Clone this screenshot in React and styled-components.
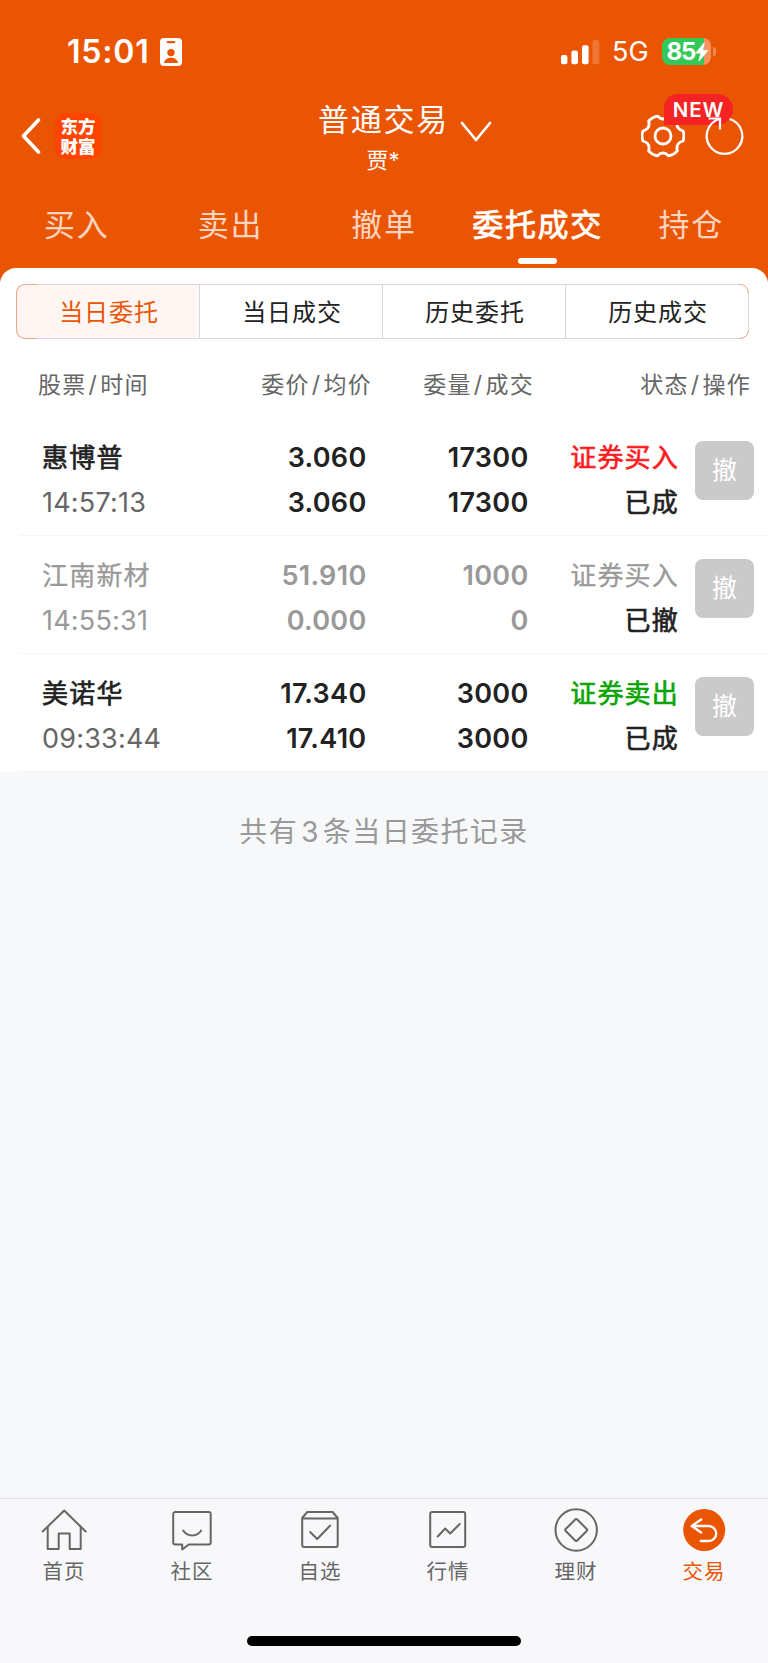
import React from "react";
import styled, { createGlobalStyle } from "styled-components";

const Global = createGlobalStyle`
  * { box-sizing: border-box; }
  body { margin: 0; background: #f7f8fa; }
`;

const Page = styled.div`
  width: 768px;
  height: 1663px;
  display: flex;
  flex-direction: column;
  background: #f7f8fa;
  overflow: hidden;
  font-family: "Inter", "Noto Sans CJK SC", sans-serif;
  color: #222;
`;

const Header = styled.header`
  height: 282px;
  flex: none;
  margin-bottom: -14px;
  background: #ea5504;
  color: #fff;
`;

const StatusBar = styled.div`
  height: 93px;
  padding: 11px 57px 0 67px;
  display: flex;
  align-items: center;
`;

const Clock = styled.span`
  width: 93px;
  font-size: 32px;
  font-weight: 600;
  line-height: 40px;
  letter-spacing: 0.8px;
  white-space: nowrap;
`;

const StatusRight = styled.div`
  margin-left: auto;
  display: flex;
  align-items: center;
`;

const Network = styled.span`
  width: 50px;
  margin-left: 12px;
  font-size: 27px;
  line-height: 32px;
`;

const Battery = styled.div`
  position: relative;
  width: 49px;
  height: 27px;
  margin-top: -1px;
  padding-left: 4.5px;
  border-radius: 8px;
  display: flex;
  align-items: center;
  background: linear-gradient(90deg, #34c759 42px, #f3935d 42px);
  font-size: 24px;
  font-weight: 700;
  line-height: 27px;
  letter-spacing: -1.2px;
`;

const BatteryCap = styled.i`
  position: absolute;
  left: 51px;
  top: 9px;
  width: 3px;
  height: 9px;
  border-radius: 0 4px 4px 0;
  background: #f08a50;
`;

const NavBar = styled.div`
  height: 89px;
  display: grid;
  grid-template-columns: 1fr auto 1fr;
  padding: 0 24px 0 20px;
`;

const NavLeft = styled.div`
  display: flex;
  align-items: center;
  gap: 13px;
  height: 86px;
`;

const Logo = styled.div`
  width: 46px;
  height: 46px;
  padding-top: 1px;
  border-radius: 10px;
  background: #ff4400;
  display: flex;
  flex-direction: column;
  align-items: center;
  justify-content: center;
  font-size: 17.5px;
  font-weight: 900;
  line-height: 19.5px;
`;

const NavTitle = styled.div`
  display: flex;
  flex-direction: column;
  padding: 3px 0 0 46px;
`;

const TitleLine = styled.div`
  display: flex;
  align-items: center;
  height: 42px;
  font-size: 31px;
  letter-spacing: 1.8px;
  gap: 11px;
`;

const Account = styled.div`
  width: 130px;
  text-align: center;
  font-size: 22px;
  line-height: 44px;
`;

const NavRight = styled.div`
  display: flex;
  align-items: center;
  justify-content: flex-end;
  gap: 19px;
  height: 86px;
`;

const GearButton = styled.div`
  position: relative;
  display: flex;
`;

const NewBadge = styled.span`
  position: absolute;
  left: 23px;
  top: -20px;
  width: 69px;
  height: 31px;
  border-radius: 14px 16px 16px 0;
  background: #f52323;
  text-align: center;
  font-size: 20.5px;
  font-weight: 600;
  line-height: 31px;
  letter-spacing: 0.8px;
`;

const RefreshButton = styled.div`
  position: relative;
  display: flex;
`;

const Tabs = styled.nav`
  display: grid;
  grid-template-columns: repeat(5, 1fr);
  height: 86px;
`;

const Tab = styled.div`
  display: flex;
  flex-direction: column;
  align-items: center;
  padding-top: 21px;
  font-size: 31px;
  line-height: 44px;
  letter-spacing: 1.7px;
  white-space: nowrap;
  color: ${(p) => (p.$active ? "#fff" : "#fbd5c0")};
  -webkit-text-stroke: ${(p) => (p.$active ? "0.8px #fff" : "0")};
  &::after {
    content: "";
    width: 39px;
    height: 6px;
    margin-top: 11px;
    border-radius: 3px;
    background: ${(p) => (p.$active ? "#fff" : "transparent")};
  }
`;

const Panel = styled.section`
  position: relative;
  height: 504px;
  flex: none;
  padding-top: 16px;
  border-radius: 16px 16px 0 0;
  background: #fff;
`;

const Segments = styled.div`
  position: relative;
  display: grid;
  grid-template-columns: 183px 183px 183px 1fr;
  width: 733px;
  height: 55px;
  margin-left: 16px;
  border: 1px solid #d5d8df;
  border-radius: 9px;
  &::before,
  &::after {
    content: "";
    position: absolute;
    top: -1px;
    bottom: -1px;
    border: 1px solid #efa684;
  }
  &::before {
    left: -1px;
    width: 20px;
    border-right: 0;
    border-radius: 9px 0 0 9px;
  }
  &::after {
    right: -1px;
    width: 9px;
    border-left: 0;
    border-radius: 0 9px 9px 0;
    mask: linear-gradient(#000 9px, transparent 9px 46px, #000 46px);
  }
`;

const Segment = styled.div`
  display: flex;
  align-items: center;
  justify-content: center;
  padding: 0 0 2px 2px;
  font-size: 24px;
  letter-spacing: 0.9px;
  color: ${(p) => (p.$active ? "#ea5504" : "#222")};
  background: ${(p) => (p.$active ? "#fff5f2" : "transparent")};
  border-radius: ${(p) => (p.$active ? "8px 0 0 8px" : "0")};
  border-right: 1px solid #d5d8df;
  &:last-child { border-right: 0; }
`;

const ColumnHeads = styled.div`
  display: grid;
  grid-template-columns: 210px 162px 162px 1fr;
  height: 79px;
  padding: 26px 17px 0 0;
  font-size: 23px;
  line-height: 40px;
  letter-spacing: 1.3px;
  color: #666;
`;

const Head = styled.span`
  padding-left: ${(p) => (p.$first ? "38px" : "0")};
  text-align: ${(p) => (p.$first ? "left" : "right")};
  white-space: nowrap;
`;

const Slash = styled.span`
  margin: 0 2px;
`;

const Row = styled.div`
  display: grid;
  grid-template-columns: 189.5px 157px 162px 1fr;
  height: 118px;
  margin-left: 20px;
  padding: 17px 14px 0 0;
  border-bottom: 1px solid #f4f5f7;
`;

const Cell = styled.div`
  display: flex;
  flex-direction: column;
  align-items: flex-end;
  line-height: 45.4px;
  white-space: nowrap;
  font-size: 27px;
  font-weight: 600;
  letter-spacing: 0.3px;
  color: ${(p) => (p.$muted ? "#999" : "#222")};
`;

const NameCell = styled(Cell)`
  align-items: flex-start;
  padding-left: 22px;
`;

const Cjk = styled.span`
  font-size: 26px;
  font-weight: 400;
  letter-spacing: 1.2px;
  color: ${(p) => p.$color};
  -webkit-text-stroke: ${(p) => (p.$light ? "0.3px" : "0.65px")} ${(p) => p.$color};
`;

const Time = styled.span`
  font-weight: 400;
  letter-spacing: 0.2px;
  color: ${(p) => (p.$muted ? "#999" : "#666")};
`;

const StatusCell = styled.div`
  display: flex;
  justify-content: flex-end;
  gap: 16px;
`;

const CancelButton = styled.button`
  width: 59px;
  height: 59px;
  margin-top: 6px;
  padding: 0;
  border: 0;
  border-radius: 8px;
  background: #cacaca;
  color: #fff;
  font: 400 25px/59px "Inter", "Noto Sans CJK SC", sans-serif;
`;

const Summary = styled.p`
  flex: 1;
  margin: 0;
  padding-top: 40px;
  text-align: center;
  font-size: 28px;
  line-height: 40px;
  letter-spacing: 1.4px;
  color: #999;
`;

const Count = styled.span`
  margin: 0 3px;
`;

const TabBar = styled.footer`
  height: 165px;
  flex: none;
  border-top: 1px solid #dfe1e4;
  background: #f8f8fb;
`;

const TabItems = styled.div`
  display: grid;
  grid-template-columns: repeat(6, 1fr);
  height: 137px;
`;

const TabItem = styled.div`
  display: flex;
  flex-direction: column;
  align-items: center;
  padding-top: 9px;
  font-size: 20.5px;
  line-height: 36px;
  letter-spacing: 1px;
  color: ${(p) => (p.$active ? "#ea5504" : "#666")};
`;

const HomeIndicator = styled.div`
  width: 274px;
  height: 10px;
  margin: 0 auto;
  border-radius: 5px;
  background: #000;
`;

const BadgeIcon = () => (
  <svg width="22" height="28" viewBox="0 0 22 28">
    <rect width="22" height="28" rx="4" fill="#fff" />
    <rect x="6.7" y="3" width="8.6" height="2.2" rx="1" fill="#ea5504" />
    <circle cx="11" cy="14.6" r="3.7" fill="#ea5504" />
    <path d="M4 25c.4-3.300 3.300-5.300 7-5.300s6.600 2 7 5.300z" fill="#ea5504" />
  </svg>
);

const SignalIcon = () => (
  <svg width="39" height="25" viewBox="0 0 39 25" fill="#fff">
    <rect x="0" y="15" width="6.400" height="9.300" rx="2" />
    <rect x="10.400" y="10.400" width="6.600" height="13.900" rx="2" />
    <rect x="21" y="5.300" width="6.600" height="19" rx="2" />
    <rect x="31.500" y="0" width="6.800" height="24.300" rx="2" opacity=".2" />
  </svg>
);

const BoltIcon = () => (
  <svg width="14" height="20" viewBox="0 0 13 18">
    <path d="M8.500.500.800 10h4.700l-1.900 7.500L12 7.500H7.200z" fill="#fff" stroke="#fff" strokeWidth=".8" strokeLinejoin="round" />
  </svg>
);

const BackIcon = () => (
  <svg width="22" height="36" viewBox="0 0 22 36" fill="none" stroke="#fff" strokeWidth="3.600" strokeLinecap="round" strokeLinejoin="round">
    <path d="M18.500 2 3.500 18l15 16" />
  </svg>
);

const Chevron = styled.svg`
  margin-top: 30px;
  flex: none;
`;

const DownIcon = () => (
  <Chevron width="32" height="22" viewBox="0 0 32 22" fill="none" stroke="#fff" strokeWidth="2.700" strokeLinecap="round" strokeLinejoin="round">
    <path d="m2 2 14 17L30 2" />
  </Chevron>
);

const polar = (radius, degrees) => {
  const a = (degrees * Math.PI) / 180;
  return `${(22 + radius * Math.cos(a)).toFixed(2)} ${(22 + radius * Math.sin(a)).toFixed(2)}`;
};

const gearPath =
  [0, 60, 120, 180, 240, 300]
    .map((a, i) => `${i ? "L" : "M"}${polar(20.7, a - 14)}Q${polar(21.8, a)} ${polar(20.7, a + 14)}Q${polar(14.2, a + 30)} ${polar(20.7, a + 46)}`)
    .join("") + "Z";

const GearIcon = () => (
  <svg width="44" height="44" viewBox="0 0 44 44" fill="none" stroke="#fff" strokeWidth="2.800" strokeLinejoin="round">
    <circle cx="22" cy="22" r="8" />
    <path d={gearPath} />
  </svg>
);

const RefreshIcon = () => (
  <svg width="40" height="48" viewBox="-0.5 1 40 48" fill="none" stroke="#fff" strokeWidth="2.200">
    <path d="M25 8A17.800 17.800 0 1 1 15 8" />
    <path d="M4 7.500h11.500v11" />
  </svg>
);

const icons = {
  home: (
    <>
      <path d="M1 23.500 22.500 2.500 44 23.500" />
      <path d="M6 19.500V41h11V25.500h11V41h11V19.500" />
    </>
  ),
  chat: (
    <>
      <path d="M5.500 4h33.500a2 2 0 0 1 2 2v28.500a2 2 0 0 1-2 2H19l-6.500 5v-5h-7a2 2 0 0 1-2-2V6a2 2 0 0 1 2-2z" />
      <path d="M13.500 22.500c4 6.500 14 6.500 18 0" />
    </>
  ),
  box: (
    <>
      <path d="m4.500 10 5-6h25.500l5 6v27a2 2 0 0 1-2 2h-31.500a2 2 0 0 1-2-2zM4.500 10.500H40" />
      <path d="m12.500 24 7 7 13-13.500" />
    </>
  ),
  chart: (
    <>
      <rect x="4.500" y="4" width="35" height="35" rx="2" />
      <path d="m12 28.500 7.500-8 5 5L34 16" />
    </>
  ),
  wealth: (
    <>
      <circle cx="22.500" cy="22" r="20.700" />
      <path d="M21.500 11.500q1-1 2 0l9.500 9.500q1 1 0 2l-9.500 9.500q-1 1-2 0L12 23q-1-1 0-2z" />
    </>
  ),
  trade: (
    <>
      <circle cx="22.500" cy="22" r="21" fill="#ea5504" stroke="none" />
      <path d="M19.500 11.500 10 18l9.500 6.500M10.500 18H27a7.500 7.500 0 0 1 0 15h-8" stroke="#fff" strokeWidth="2.300" />
    </>
  ),
};

const TabIcon = ({ name }) => (
  <svg width="46" height="46" viewBox="-0.7 0 46 46" fill="none" stroke="#666" strokeWidth="2" strokeLinejoin="round" strokeLinecap="round">
    {icons[name]}
  </svg>
);

const tabs = ["买入", "卖出", "撤单", "委托成交", "持仓"];
const segments = ["当日委托", "当日成交", "历史委托", "历史成交"];
const heads = [
  ["股票", "时间"],
  ["委价", "均价"],
  ["委量", "成交"],
  ["状态", "操作"],
];
const orders = [
  { name: "惠博普", time: "14:57:13", price: "3.060", avg: "3.060", qty: "17300", done: "17300", side: "证券买入", color: "#ff1a1e", state: "已成" },
  { name: "江南新材", time: "14:55:31", price: "51.910", avg: "0.000", qty: "1000", done: "0", side: "证券买入", color: "#999", state: "已撤", muted: true },
  { name: "美诺华", time: "09:33:44", price: "17.340", avg: "17.410", qty: "3000", done: "3000", side: "证券卖出", color: "#08a400", state: "已成" },
];
const navItems = [
  ["home", "首页"],
  ["chat", "社区"],
  ["box", "自选"],
  ["chart", "行情"],
  ["wealth", "理财"],
  ["trade", "交易"],
];

export default function App() {
  return (
    <Page>
      <Global />
      <Header>
        <StatusBar>
          <Clock>15:01</Clock>
          <BadgeIcon />
          <StatusRight>
            <SignalIcon />
            <Network>5G</Network>
            <Battery>
              85
              <BoltIcon />
              <BatteryCap />
            </Battery>
          </StatusRight>
        </StatusBar>
        <NavBar>
          <NavLeft>
            <BackIcon />
            <Logo>
              <span>东方</span>
              <span>财富</span>
            </Logo>
          </NavLeft>
          <NavTitle>
            <TitleLine>
              普通交易
              <DownIcon />
            </TitleLine>
            <Account>贾*</Account>
          </NavTitle>
          <NavRight>
            <GearButton>
              <GearIcon />
              <NewBadge>NEW</NewBadge>
            </GearButton>
            <RefreshButton>
              <RefreshIcon />
            </RefreshButton>
          </NavRight>
        </NavBar>
        <Tabs>
          {tabs.map((t) => (
            <Tab key={t} $active={t === "委托成交"}>{t}</Tab>
          ))}
        </Tabs>
      </Header>
      <Panel>
        <Segments>
          {segments.map((s, i) => (
            <Segment key={s} $active={i === 0}>{s}</Segment>
          ))}
        </Segments>
        <ColumnHeads>
          {heads.map(([a, b], i) => (
            <Head key={a} $first={i === 0}>
              {a}
              <Slash>/</Slash>
              {b}
            </Head>
          ))}
        </ColumnHeads>
        {orders.map((o) => (
          <Row key={o.time}>
            <NameCell>
              <Cjk $light={o.muted} $color={o.muted ? "#999" : "#222"}>{o.name}</Cjk>
              <Time $muted={o.muted}>{o.time}</Time>
            </NameCell>
            <Cell $muted={o.muted}>
              <span>{o.price}</span>
              <span>{o.avg}</span>
            </Cell>
            <Cell $muted={o.muted}>
              <span>{o.qty}</span>
              <span>{o.done}</span>
            </Cell>
            <StatusCell>
              <Cell>
                <Cjk $light={o.muted} $color={o.color}>{o.side}</Cjk>
                <Cjk $color="#222">{o.state}</Cjk>
              </Cell>
              <CancelButton>撤</CancelButton>
            </StatusCell>
          </Row>
        ))}
      </Panel>
      <Summary>
        共有<Count>3</Count>条当日委托记录
      </Summary>
      <TabBar>
        <TabItems>
          {navItems.map(([icon, label]) => (
            <TabItem key={icon} $active={icon === "trade"}>
              <TabIcon name={icon} />
              {label}
            </TabItem>
          ))}
        </TabItems>
        <HomeIndicator />
      </TabBar>
    </Page>
  );
}
